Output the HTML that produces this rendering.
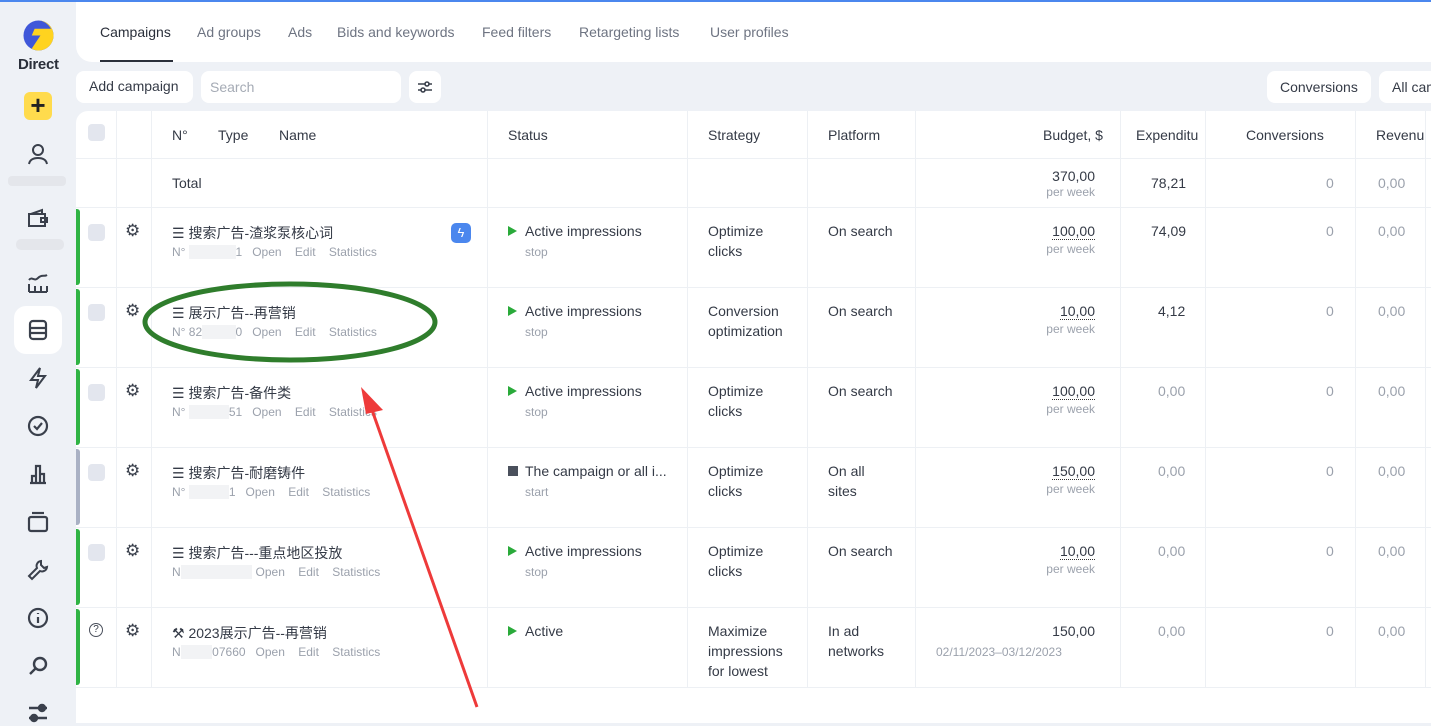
<!DOCTYPE html>
<html><head><meta charset="utf-8"><style>
*{margin:0;padding:0;box-sizing:border-box}
body{width:1431px;height:723px;overflow:hidden;background:#eef1f6;font-family:"Liberation Sans","Noto Sans CJK SC",sans-serif;color:#343a46;font-size:14px;position:relative}
.a{position:absolute;white-space:nowrap}
.g{color:#9ba1ac}
.s{font-size:12px}
.vl{position:absolute;top:111px;bottom:36px;width:1px;background:#edf0f4}
.hl{position:absolute;left:76px;right:0;height:1px;background:#edf0f4}
.cb{position:absolute;width:17px;height:17px;border-radius:4px;background:#e3e6ee}
.bar{position:absolute;left:76px;width:4px;height:76px;border-radius:0 3px 3px 0;background:#2fb344}
.tri{display:inline-block;width:0;height:0;border-left:9px solid #2aaa3a;border-top:5.5px solid transparent;border-bottom:5.5px solid transparent;margin-right:8px;vertical-align:0}
.ul{border-bottom:1px dotted #333}
.ic{position:absolute;left:26px}
.bl{background:#f2f3f5;color:#f2f3f5}
.gear{position:absolute;left:125px;font-size:17px;color:#3a404c}
</style></head><body>
<div class="a" style="left:0;top:0;width:1431px;height:2px;background:#4b87ee"></div>
<!-- sidebar -->
<svg class="a" style="left:23px;top:20px" width="31" height="31" viewBox="0 0 32 32"><circle cx="16" cy="16" r="15.5" fill="#3f57d9"/><path d="M16 .5A15.5 15.5 0 0 1 31.5 16 15.5 15.5 0 0 1 16 31.5c-3 0-5-.8-7-2L18 16h-9l3-7h17C26 4 21 .5 16 .5z" fill="#ffd31f"/></svg>
<div class="a" style="left:18px;top:56px;font-weight:bold;font-size:15px;color:#2a2f3a;letter-spacing:-0.3px">Direct</div>
<div class="a" style="left:24px;top:92px;width:28px;height:28px;border-radius:6px;background:#ffdb4d;text-align:center;font-size:26px;line-height:27px;font-weight:bold;color:#222">+</div>
<svg class="ic" style="top:142px" width="24" height="24" viewBox="0 0 24 24" fill="none" stroke="#3a404c" stroke-width="2"><circle cx="12" cy="8" r="5"/><path d="M3 22c1-5 5-6 9-6s8 1 9 6"/></svg>
<div class="a" style="left:8px;top:176px;width:58px;height:10px;background:#e4e6eb;border-radius:4px"></div>
<svg class="ic" style="top:206px" width="24" height="24" viewBox="0 0 24 24" fill="none" stroke="#3a404c" stroke-width="2"><path d="M3 8h16v12H3zM5 8l11-4v4M15 12h6v4h-6z"/></svg>
<div class="a" style="left:16px;top:239px;width:48px;height:11px;background:#e4e6eb;border-radius:5px"></div>
<svg class="ic" style="top:272px" width="24" height="22" viewBox="0 0 24 22" fill="none" stroke="#3a404c" stroke-width="2"><path d="M3 8c3-4 5 2 9-2s6-1 9-3M3 20V12M3 20h18M9 20v-6M15 20v-6M21 20v-6"/></svg>
<div class="a" style="left:14px;top:306px;width:48px;height:48px;border-radius:12px;background:#fff"></div>
<svg class="ic" style="top:318px" width="24" height="24" viewBox="0 0 24 24" fill="none" stroke="#3a404c" stroke-width="2.2"><rect x="4" y="3" width="16" height="18" rx="3"/><path d="M4 10h16M4 15h16"/></svg>
<svg class="ic" style="top:366px" width="24" height="24" viewBox="0 0 24 24" fill="none" stroke="#3a404c" stroke-width="2"><path d="M14 2L5 14h7l-2 8 9-12h-7z"/></svg>
<svg class="ic" style="top:414px" width="24" height="24" viewBox="0 0 24 24" fill="none" stroke="#3a404c" stroke-width="2.2"><circle cx="12" cy="12" r="9"/><path d="M8 12l3 3 5-6"/></svg>
<svg class="ic" style="top:462px" width="24" height="24" viewBox="0 0 24 24" fill="none" stroke="#3a404c" stroke-width="2.2"><path d="M4 21h16M6 21v-7h4v7M10 21V4h4v17M14 21v-9h4v9"/></svg>
<svg class="ic" style="top:510px" width="24" height="24" viewBox="0 0 24 24" fill="none" stroke="#3a404c" stroke-width="2.2"><rect x="3" y="7" width="18" height="14" rx="2"/><path d="M6 3h12"/></svg>
<svg class="ic" style="top:558px" width="24" height="24" viewBox="0 0 24 24" fill="none" stroke="#3a404c" stroke-width="2"><path d="M15 3a5 5 0 0 0-4 7L3 18l3 3 8-8a5 5 0 0 0 7-4l-3 1-3-3z"/></svg>
<svg class="ic" style="top:606px" width="24" height="24" viewBox="0 0 24 24" fill="none" stroke="#3a404c" stroke-width="2.2"><circle cx="12" cy="12" r="9"/><path d="M12 11v6M12 7v1"/></svg>
<svg class="ic" style="top:654px" width="24" height="24" viewBox="0 0 24 24" fill="none" stroke="#3a404c" stroke-width="2.4"><circle cx="14" cy="10" r="6"/><path d="M9.5 14.5L4 20"/></svg>
<svg class="ic" style="top:702px" width="24" height="24" viewBox="0 0 24 24" fill="none" stroke="#3a404c" stroke-width="2.4"><path d="M3 6h18M3 16h18"/><circle cx="16" cy="6" r="3" fill="#3a404c"/><circle cx="8" cy="16" r="3" fill="#3a404c"/></svg>
<!-- tabs -->
<div class="a" style="left:76px;top:2px;width:1355px;height:60px;background:#fff;border-radius:0 0 0 16px"></div>
<div class="a" style="left:100px;top:24px;font-size:14px;color:#2a2f3a">Campaigns</div>
<div class="a" style="left:100px;top:60px;width:73px;height:2px;background:#2a2f3a"></div>
<div class="a" style="left:197px;top:24px;color:#6e7482">Ad groups</div>
<div class="a" style="left:288px;top:24px;color:#6e7482">Ads</div>
<div class="a" style="left:337px;top:24px;color:#6e7482">Bids and keywords</div>
<div class="a" style="left:482px;top:24px;color:#6e7482">Feed filters</div>
<div class="a" style="left:579px;top:24px;color:#6e7482">Retargeting lists</div>
<div class="a" style="left:710px;top:24px;color:#6e7482">User profiles</div>
<!-- toolbar -->
<div class="a" style="left:76px;top:71px;width:117px;height:32px;background:#fff;border-radius:8px;padding:7px 13px">Add campaign</div>
<div class="a" style="left:201px;top:71px;width:200px;height:32px;background:#fff;border-radius:8px;padding:8px 9px;color:#a5abb5">Search</div>
<div class="a" style="left:409px;top:71px;width:32px;height:32px;background:#fff;border-radius:8px"></div>
<svg class="a" style="left:417px;top:79px" width="16" height="16" viewBox="0 0 16 16" fill="none" stroke="#3a404c" stroke-width="1.6"><path d="M1 5h14M1 11h14"/><circle cx="10" cy="5" r="2" fill="#fff"/><circle cx="6" cy="11" r="2" fill="#fff"/></svg>
<div class="a" style="left:1267px;top:71px;width:104px;height:32px;background:#fff;border-radius:8px;padding:8px 13px">Conversions</div>
<div class="a" style="left:1379px;top:71px;width:80px;height:32px;background:#fff;border-radius:8px;padding:8px 13px">All campaigns</div>
<!-- table -->
<div class="a" style="left:76px;top:111px;width:1355px;height:612px;background:#fff;border-radius:12px 0 0 0"></div>
<div class="vl" style="left:116px"></div><div class="vl" style="left:151px"></div><div class="vl" style="left:487px"></div><div class="vl" style="left:687px"></div><div class="vl" style="left:807px"></div><div class="vl" style="left:915px"></div><div class="vl" style="left:1120px"></div><div class="vl" style="left:1205px"></div><div class="vl" style="left:1355px"></div><div class="vl" style="left:1425px"></div>
<div class="hl" style="top:158px"></div><div class="hl" style="top:207px"></div><div class="hl" style="top:287px"></div><div class="hl" style="top:367px"></div><div class="hl" style="top:447px"></div><div class="hl" style="top:527px"></div><div class="hl" style="top:607px"></div><div class="hl" style="top:687px"></div>
<div class="cb" style="left:88px;top:124px"></div>
<div class="a" style="left:172px;top:127px">N°</div>
<div class="a" style="left:218px;top:127px">Type</div>
<div class="a" style="left:279px;top:127px">Name</div>
<div class="a" style="left:508px;top:127px">Status</div>
<div class="a" style="left:708px;top:127px">Strategy</div>
<div class="a" style="left:828px;top:127px">Platform</div>
<div class="a" style="left:1043px;top:127px">Budget, $</div>
<div class="a" style="left:1136px;top:127px">Expenditu</div>
<div class="a" style="left:1246px;top:127px">Conversions</div>
<div class="a" style="left:1376px;top:127px">Revenu</div>
<!-- total -->
<div class="a" style="left:172px;top:175px">Total</div>
<div class="a" style="right:336px;top:168px">370,00</div>
<div class="a g s" style="right:336px;top:185px">per week</div>
<div class="a" style="left:1151px;top:175px">78,21</div>
<div class="a g" style="left:1326px;top:175px">0</div>
<div class="a g" style="left:1378px;top:175px">0,00</div>

<!-- rows -->
<div class="bar" style="top:209px"></div><div class="cb" style="left:88px;top:224px"></div><div class="gear" style="top:221px">⚙</div>
<div class="a" style="left:172px;top:223px">☰ 搜索广告-渣浆泵核心词</div>
<div class="a g s" style="left:172px;top:245px">N° <span class="bl">8200000</span>1&nbsp;&nbsp; Open&nbsp;&nbsp;&nbsp; Edit&nbsp;&nbsp;&nbsp; Statistics</div>
<div class="a" style="left:451px;top:223px;width:20px;height:20px;border-radius:5px;background:#4b87ee;color:#fff;text-align:center;font-size:13px;line-height:20px">ϟ</div>
<div class="a" style="left:508px;top:223px"><span class="tri"></span>Active impressions</div><div class="a g s" style="left:525px;top:245px">stop</div>
<div class="a" style="left:708px;top:221px;line-height:20px">Optimize<br>clicks</div>
<div class="a" style="left:828px;top:223px">On search</div>
<div class="a" style="right:336px;top:223px"><span class="ul">100,00</span></div><div class="a g s" style="right:336px;top:242px">per week</div>
<div class="a" style="left:1151px;top:223px">74,09</div><div class="a g" style="left:1326px;top:223px">0</div><div class="a g" style="left:1378px;top:223px">0,00</div>

<div class="bar" style="top:289px"></div><div class="cb" style="left:88px;top:304px"></div><div class="gear" style="top:301px">⚙</div>
<div class="a" style="left:172px;top:303px">☰ 展示广告--再营销</div>
<div class="a g s" style="left:172px;top:325px">N° 82<span class="bl">00000</span>0&nbsp;&nbsp; Open&nbsp;&nbsp;&nbsp; Edit&nbsp;&nbsp;&nbsp; Statistics</div>
<div class="a" style="left:508px;top:303px"><span class="tri"></span>Active impressions</div><div class="a g s" style="left:525px;top:325px">stop</div>
<div class="a" style="left:708px;top:301px;line-height:20px">Conversion<br>optimization</div>
<div class="a" style="left:828px;top:303px">On search</div>
<div class="a" style="right:336px;top:303px"><span class="ul">10,00</span></div><div class="a g s" style="right:336px;top:322px">per week</div>
<div class="a" style="left:1158px;top:303px">4,12</div><div class="a g" style="left:1326px;top:303px">0</div><div class="a g" style="left:1378px;top:303px">0,00</div>

<div class="bar" style="top:369px"></div><div class="cb" style="left:88px;top:384px"></div><div class="gear" style="top:381px">⚙</div>
<div class="a" style="left:172px;top:383px">☰ 搜索广告-备件类</div>
<div class="a g s" style="left:172px;top:405px">N° <span class="bl">820000</span>51&nbsp;&nbsp; Open&nbsp;&nbsp;&nbsp; Edit&nbsp;&nbsp;&nbsp; Statistics</div>
<div class="a" style="left:508px;top:383px"><span class="tri"></span>Active impressions</div><div class="a g s" style="left:525px;top:405px">stop</div>
<div class="a" style="left:708px;top:381px;line-height:20px">Optimize<br>clicks</div>
<div class="a" style="left:828px;top:383px">On search</div>
<div class="a" style="right:336px;top:383px"><span class="ul">100,00</span></div><div class="a g s" style="right:336px;top:402px">per week</div>
<div class="a g" style="left:1158px;top:383px">0,00</div><div class="a g" style="left:1326px;top:383px">0</div><div class="a g" style="left:1378px;top:383px">0,00</div>

<div class="bar" style="top:449px;background:#a9b1c4"></div><div class="cb" style="left:88px;top:464px"></div><div class="gear" style="top:461px">⚙</div>
<div class="a" style="left:172px;top:463px">☰ 搜索广告-耐磨铸件</div>
<div class="a g s" style="left:172px;top:485px">N° <span class="bl">820000</span>1&nbsp;&nbsp; Open&nbsp;&nbsp;&nbsp; Edit&nbsp;&nbsp;&nbsp; Statistics</div>
<div class="a" style="left:508px;top:463px"><span style="display:inline-block;width:10px;height:10px;background:#4a505c;margin-right:7px"></span>The campaign or all i...</div><div class="a g s" style="left:525px;top:485px">start</div>
<div class="a" style="left:708px;top:461px;line-height:20px">Optimize<br>clicks</div>
<div class="a" style="left:828px;top:461px;line-height:20px">On all<br>sites</div>
<div class="a" style="right:336px;top:463px"><span class="ul">150,00</span></div><div class="a g s" style="right:336px;top:482px">per week</div>
<div class="a g" style="left:1158px;top:463px">0,00</div><div class="a g" style="left:1326px;top:463px">0</div><div class="a g" style="left:1378px;top:463px">0,00</div>

<div class="bar" style="top:529px"></div><div class="cb" style="left:88px;top:544px"></div><div class="gear" style="top:541px">⚙</div>
<div class="a" style="left:172px;top:543px">☰ 搜索广告---重点地区投放</div>
<div class="a g s" style="left:172px;top:565px">N<span class="bl">°8200000000</span> Open&nbsp;&nbsp;&nbsp; Edit&nbsp;&nbsp;&nbsp; Statistics</div>
<div class="a" style="left:508px;top:543px"><span class="tri"></span>Active impressions</div><div class="a g s" style="left:525px;top:565px">stop</div>
<div class="a" style="left:708px;top:541px;line-height:20px">Optimize<br>clicks</div>
<div class="a" style="left:828px;top:543px">On search</div>
<div class="a" style="right:336px;top:543px"><span class="ul">10,00</span></div><div class="a g s" style="right:336px;top:562px">per week</div>
<div class="a g" style="left:1158px;top:543px">0,00</div><div class="a g" style="left:1326px;top:543px">0</div><div class="a g" style="left:1378px;top:543px">0,00</div>

<div class="bar" style="top:609px"></div><div class="a" style="left:89px;top:623px;width:14px;height:14px;border:1.3px solid #4a505c;border-radius:50%;font-size:10px;text-align:center;line-height:12px">?</div><div class="gear" style="top:621px">⚙</div>
<div class="a" style="left:172px;top:623px">⚒ 2023展示广告--再营销</div>
<div class="a g s" style="left:172px;top:645px">N<span class="bl">°8200</span>07660&nbsp;&nbsp; Open&nbsp;&nbsp;&nbsp; Edit&nbsp;&nbsp;&nbsp; Statistics</div>
<div class="a" style="left:508px;top:623px"><span class="tri"></span>Active</div>
<div class="a" style="left:708px;top:621px;line-height:20px">Maximize<br>impressions<br>for lowest</div>
<div class="a" style="left:828px;top:621px;line-height:20px">In ad<br>networks</div>
<div class="a" style="right:336px;top:623px">150,00</div><div class="a g s" style="left:936px;top:645px">02/11/2023–03/12/2023</div>
<div class="a g" style="left:1158px;top:623px">0,00</div><div class="a g" style="left:1326px;top:623px">0</div><div class="a g" style="left:1378px;top:623px">0,00</div>

<!-- annotations -->
<svg class="a" style="left:0;top:0" width="1431" height="723">
<ellipse cx="290" cy="322" rx="145" ry="38" fill="none" stroke="#2f7d2c" stroke-width="5"/>
<line x1="477" y1="707" x2="372" y2="410" stroke="#ee3a3a" stroke-width="3"/>
<path d="M361 387L383 410L366 414Z" fill="#ee3a3a"/>
</svg>
</body></html>
